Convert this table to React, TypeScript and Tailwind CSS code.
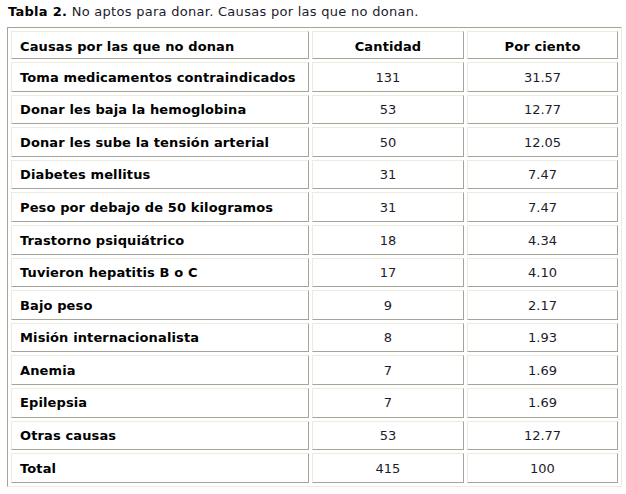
import React from "react";

const rows = [
  ["Toma medicamentos contraindicados", "131", "31.57"],
  ["Donar les baja la hemoglobina", "53", "12.77"],
  ["Donar les sube la tensión arterial", "50", "12.05"],
  ["Diabetes mellitus", "31", "7.47"],
  ["Peso por debajo de 50 kilogramos", "31", "7.47"],
  ["Trastorno psiquiátrico", "18", "4.34"],
  ["Tuvieron hepatitis B o C", "17", "4.10"],
  ["Bajo peso", "9", "2.17"],
  ["Misión internacionalista", "8", "1.93"],
  ["Anemia", "7", "1.69"],
  ["Epilepsia", "7", "1.69"],
  ["Otras causas", "53", "12.77"],
  ["Total", "415", "100"],
];

const cell = "border border-t-[#ecebe0] border-l-[#ecebe0] border-b-[#a6a498] border-r-[#a6a498] p-0";

export default function App() {
  return (
    <div className="bg-white w-[626px] h-[494px] font-['DejaVu_Sans',Verdana,sans-serif] text-[13px] text-[#1c1c2c]">
      <p className="pl-2 pt-[4px] leading-[16px] tracking-[0.28px]">
        <b className="text-black">Tabla 2.</b> No aptos para donar. Causas por las que no donan.
      </p>
      <table className="ml-[7px] mt-[7px] w-[615px] border-separate border-spacing-[3px] border border-t-[#a6a498] border-l-[#a6a498] border-b-[#ecebe0] border-r-[#ecebe0]">
        <thead>
          <tr className="h-[28px]">
            <th className={`${cell} w-[298px] text-left pl-2 pt-[3px] font-bold text-black tracking-[0.12px]`}>Causas por las que no donan</th>
            <th className={`${cell} w-[152px] text-center pt-[3px] font-bold text-black tracking-[0.12px]`}>Cantidad</th>
            <th className={`${cell} text-center pt-[3px] font-bold text-black tracking-[0.12px]`}>Por ciento</th>
          </tr>
        </thead>
        <tbody>
          {rows.map((r, i) => (
            <tr key={i} className="h-[29.6px]">
              <td className={`${cell} text-left pl-2 pt-[1px] font-bold text-black tracking-[0.12px]`}>{r[0]}</td>
              <td className={`${cell} text-center pt-[1px]`}>{r[1]}</td>
              <td className={`${cell} text-center pt-[1px]`}>{r[2]}</td>
            </tr>
          ))}
        </tbody>
      </table>
    </div>
  );
}
